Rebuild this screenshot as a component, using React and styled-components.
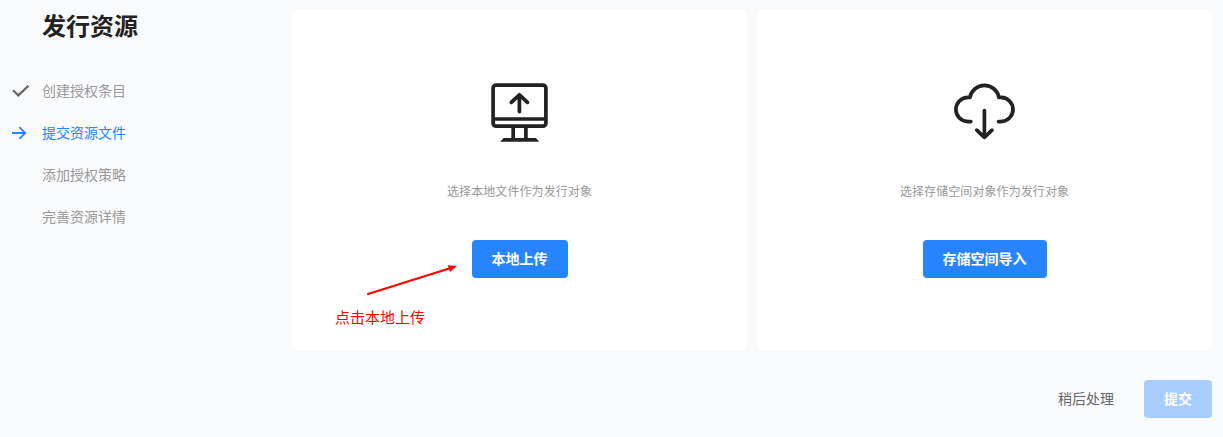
import React from 'react';
import styled, { createGlobalStyle } from 'styled-components';

const GlobalStyle = createGlobalStyle`
  *, *::before, *::after { box-sizing: border-box; }
  body {
    margin: 0;
    background: #fafbfd;
    font-family: "Noto Sans CJK SC", sans-serif;
    font-size: 14px;
  }
`;

const Page = styled.div`
  display: flex;
  width: 1223px;
  height: 437px;
  overflow: hidden;
  background: #fafbfd;
`;

const Sidebar = styled.aside`
  width: 292px;
  padding: 9px 0 0 12px;
`;

const Title = styled.h1`
  margin: 0 0 29px 30px;
  font-size: 24px;
  line-height: 32px;
  font-weight: 700;
  color: #222;
`;

const Steps = styled.ul`
  margin: 0;
  padding: 0;
  list-style: none;
`;

const Step = styled.li`
  display: flex;
  align-items: center;
  height: 42px;
  color: ${(p) => (p.$active ? '#2784ff' : '#999')};
`;

const StepMark = styled.span`
  display: flex;
  width: 30px;
  flex: none;
`;

const StepLabel = styled.span`
  padding-bottom: 2px;
`;

const Main = styled.main`
  display: flex;
  flex-direction: column;
  width: 920px;
  padding-top: 10px;
`;

const Cards = styled.div`
  display: flex;
  gap: 10px;
`;

const Card = styled.section`
  position: relative;
  display: flex;
  flex: 1;
  flex-direction: column;
  align-items: center;
  height: 340px;
  padding-top: 70px;
  border-radius: 6px;
  background: #fff;
`;

const CardIcon = styled.svg`
  width: 65px;
  height: 65px;
  fill: none;
  stroke: #222;
  stroke-width: 3.7;
  stroke-linecap: round;
  stroke-linejoin: round;
`;

const Hint = styled.p`
  margin: 36px 0 40px;
  font-size: 12px;
  line-height: 19px;
  letter-spacing: 0.08px;
  color: #999;
`;

const Button = styled.button`
  height: 38px;
  padding: 0 20px 2px;
  border: 0;
  border-radius: 4px;
  background: ${(p) => (p.disabled ? '#a8cdff' : '#2784ff')};
  color: #fff;
  font-family: inherit;
  font-size: 14px;
  font-weight: 700;
  line-height: 36px;
`;

const TextButton = styled(Button)`
  padding: 0 0 2px;
  background: none;
  color: #666;
  font-weight: 400;
`;

const Footer = styled.footer`
  display: flex;
  justify-content: flex-end;
  gap: 30px;
  margin-top: 30px;
`;

const Callout = styled.div`
  position: absolute;
  left: 43px;
  top: 250px;
  color: #ff0000;
  font-size: 15px;
  line-height: 22px;
`;

const CalloutArrow = styled.svg`
  display: block;
  margin: 0 0 9px 29px;
`;

function CheckMark() {
  return (
    <svg width="18" height="14" viewBox="0 0 18 14" fill="none" stroke="#666" strokeWidth="2.2">
      <path d="M1 6.2 6.4 11.4 16.5 1.8" />
    </svg>
  );
}

function ArrowMark() {
  return (
    <svg width="16" height="14" viewBox="0 0 16 14" fill="none" stroke="#2784ff" strokeWidth="1.8">
      <path d="M0 7h13.2M7.4 1.2 13.2 7 7.4 12.8" />
    </svg>
  );
}

function MonitorIcon() {
  return (
    <CardIcon viewBox="0 0 65 65">
      <rect x="6.1" y="5.1" width="52.8" height="41.1" rx="3" />
      <path d="M6 39h53M26.2 47v11M38.9 47v11" strokeLinecap="butt" />
      <path d="M13.2 61.8 16.6 57.9H48.9L52.3 61.8Z" fill="#222" stroke="none" />
      <path d="M32.4 31.6V14.8M24.3 22.4l8.1-7.6 8.1 7.6" />
    </CardIcon>
  );
}

function CloudIcon() {
  return (
    <CardIcon viewBox="0 0 65 65">
      <path d="M18.8 41.6H16a12.1 12.1 0 0 1 0-24.2h2a14.7 14.7 0 0 1 28.9 0h2a12.1 12.1 0 0 1 0 24.2h-2.3" />
      <path d="M32.4 30.6V57M24.8 50.1 32.4 57.3l7.6-7.2" />
    </CardIcon>
  );
}

const steps = [
  { label: '创建授权条目', mark: <CheckMark /> },
  { label: '提交资源文件', mark: <ArrowMark />, active: true },
  { label: '添加授权策略' },
  { label: '完善资源详情' },
];

export default function App() {
  return (
    <>
      <GlobalStyle />
      <Page>
        <Sidebar>
          <Title>发行资源</Title>
          <Steps>
            {steps.map((s) => (
              <Step key={s.label} $active={s.active}>
                <StepMark>{s.mark}</StepMark>
                <StepLabel>{s.label}</StepLabel>
              </Step>
            ))}
          </Steps>
        </Sidebar>
        <Main>
          <Cards>
            <Card>
              <MonitorIcon />
              <Hint>选择本地文件作为发行对象</Hint>
              <Button>本地上传</Button>
              <Callout>
                <CalloutArrow width="96" height="37" viewBox="0 0 96 37">
                  <path d="M4 34 86 8.3" stroke="#ff0000" strokeWidth="2.2" strokeLinecap="round" />
                  <path d="M93 6 83.8 5.2 86 12Z" fill="#ff0000" />
                </CalloutArrow>
                点击本地上传
              </Callout>
            </Card>
            <Card>
              <CloudIcon />
              <Hint>选择存储空间对象作为发行对象</Hint>
              <Button>存储空间导入</Button>
            </Card>
          </Cards>
          <Footer>
            <TextButton>稍后处理</TextButton>
            <Button disabled>提交</Button>
          </Footer>
        </Main>
      </Page>
    </>
  );
}
